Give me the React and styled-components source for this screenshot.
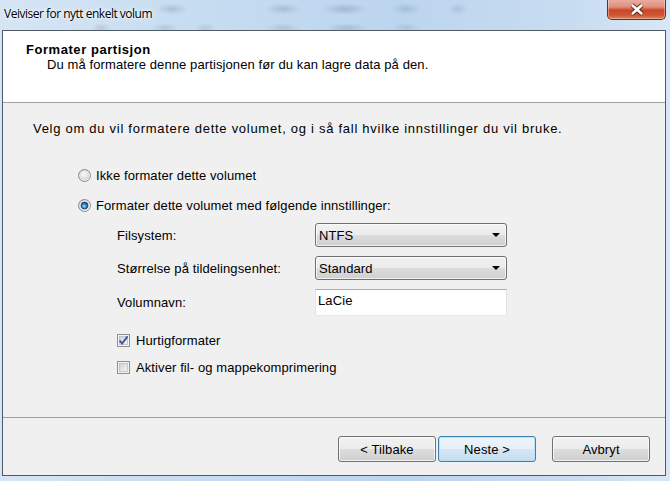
import React, { useId } from "react";
import styled, { createGlobalStyle } from "styled-components";

const GlobalStyle = createGlobalStyle`
  *, *::before, *::after { box-sizing: border-box; }
  html, body { margin: 0; padding: 0; }
  body {
    width: 670px;
    height: 481px;
    overflow: hidden;
    background: #c4daf0;
    font-family: "Liberation Sans", Arial, sans-serif;
  }
`;

const Window = styled.div`
  width: 670px;
  height: 481px;
  display: flex;
  flex-direction: column;
  background:
    radial-gradient(ellipse 16px 6px at 172px 9px, rgba(60, 80, 100, 0.2), transparent),
    radial-gradient(ellipse 18px 6px at 283px 9px, rgba(60, 80, 100, 0.2), transparent),
    radial-gradient(ellipse 24px 6px at 345px 9px, rgba(60, 80, 100, 0.22), transparent),
    radial-gradient(ellipse 15px 6px at 406px 9px, rgba(60, 80, 100, 0.18), transparent),
    radial-gradient(ellipse 10px 6px at 458px 9px, rgba(60, 80, 100, 0.15), transparent),
    radial-gradient(ellipse 10px 5px at 101px 28px, rgba(60, 80, 100, 0.16), transparent),
    radial-gradient(ellipse 14px 5px at 165px 28px, rgba(60, 80, 100, 0.16), transparent),
    radial-gradient(ellipse 10px 5px at 205px 28px, rgba(60, 80, 100, 0.14), transparent),
    radial-gradient(ellipse 18px 5px at 283px 28px, rgba(60, 80, 100, 0.16), transparent),
    radial-gradient(ellipse 22px 5px at 347px 28px, rgba(60, 80, 100, 0.18), transparent),
    radial-gradient(ellipse 14px 5px at 406px 28px, rgba(60, 80, 100, 0.14), transparent),
    linear-gradient(90deg, #d6e5f4 0%, #c6dcf1 30%, #bcd5ee 60%, #c8dcf1 85%, #d8e7f5 100%);
`;

const TitleBar = styled.div`
  height: 30px;
  flex: none;
  display: flex;
  justify-content: space-between;
  align-items: flex-start;
`;

const Caption = styled.div`
  padding: 6px 0 0 4px;
  font-family: "Open Sans", "Liberation Sans", sans-serif;
  font-size: 12px;
  line-height: 16px;
  letter-spacing: -0.5px;
  color: #000;
  text-shadow: 0 0 6px #fff, 0 0 3px #fff;
`;

const CloseButton = styled.button`
  width: 59px;
  height: 21px;
  margin: -1px 4px 0 0;
  padding: 0;
  border: 1px solid #6b2a1f;
  border-top: none;
  border-radius: 0 0 5px 5px;
  background: linear-gradient(
    #eab0a3 0%,
    #df8f7b 40%,
    #c9472a 55%,
    #cf5534 80%,
    #e0825c 100%
  );
  box-shadow: inset 0 0 0 1px rgba(255, 255, 255, 0.35);
  display: flex;
  align-items: center;
  justify-content: center;
`;

const Client = styled.div`
  flex: 1;
  min-height: 0;
  margin: 0 4px 5px 2px;
  border: 1px solid #4f5a66;
  background: #f0f0f0;
  display: flex;
  flex-direction: column;
  color: #000;
  font-size: 13px;
  letter-spacing: 0.1px;
`;

const Header = styled.header`
  height: 72px;
  flex: none;
  background: #fff;
  border-bottom: 1px solid #a0a0a0;
  padding: 11px 0 0 23px;
`;

const HeaderTitle = styled.h1`
  margin: 0;
  font-size: 13px;
  font-weight: bold;
  line-height: 15px;
  letter-spacing: 0.55px;
`;

const HeaderSubtitle = styled.p`
  margin: 0 0 0 21px;
  font-size: 13px;
  line-height: 15px;
`;

const Body = styled.main`
  flex: 1;
  min-height: 0;
  padding: 18px 0 0 30px;
  display: flex;
  flex-direction: column;
  align-items: flex-start;
`;

const Intro = styled.p`
  margin: 0;
  line-height: 15px;
  letter-spacing: 0.72px;
`;

const OptionList = styled.div`
  margin: 32px 0 0 45px;
  display: flex;
  flex-direction: column;
  gap: 15px;
`;

const ChoiceRow = styled.label`
  display: flex;
  align-items: center;
  gap: ${(p) => p.$gap || 5}px;
  height: 15px;
  line-height: 15px;
`;

const Settings = styled.div`
  margin: 10px 0 0 84px;
  display: grid;
  grid-template-columns: 198px 192px;
  grid-auto-rows: auto;
  row-gap: 9px;
  align-items: center;
`;

const FieldLabel = styled.span`
  line-height: 15px;
`;

const Combo = styled.div`
  height: 24px;
  border: 1px solid #707070;
  border-radius: 3px;
  padding: 0 6px 0 3px;
  display: flex;
  align-items: center;
  justify-content: space-between;
  background: linear-gradient(#f2f2f2 0%, #ebebeb 50%, #dddddd 50%, #cfcfcf 100%);
  box-shadow: inset 0 0 0 1px rgba(255, 255, 255, 0.7);
  font-size: 13px;
`;

const TextField = styled.input`
  height: 27px;
  width: 192px;
  margin: 0;
  padding: 0 3px 4px 2px;
  border: 1px solid #dbe3ec;
  border-top-color: #abadb3;
  border-left-color: #e2e3ea;
  border-bottom-color: #e3e9ef;
  background: #fff;
  font-family: "Liberation Sans", Arial, sans-serif;
  font-size: 13px;
  letter-spacing: 0.1px;
  color: #000;
  outline: none;
`;

const CheckList = styled.div`
  margin: 17px 0 0 84px;
  display: flex;
  flex-direction: column;
  gap: 12px;
`;

const Footer = styled.footer`
  height: 58px;
  flex: none;
  border-top: 1px solid #a0a0a0;
  padding: 18px 15px 0 0;
  display: flex;
  justify-content: flex-end;
  align-items: flex-start;
`;

const NavGroup = styled.div`
  display: flex;
  gap: 2px;
  margin-right: 16px;
`;

const Button = styled.button`
  width: 98px;
  height: 26px;
  padding: 0;
  border: 1px solid ${(p) => (p.$primary ? "#3c7fb1" : "#707070")};
  border-radius: 3px;
  background: ${(p) =>
    p.$primary
      ? "linear-gradient(#eef6fc 0%, #e4eff9 50%, #d4e6f4 50%, #c8ddef 100%)"
      : "linear-gradient(#f2f2f2 0%, #ebebeb 50%, #dddddd 50%, #cfcfcf 100%)"};
  box-shadow: inset 0 0 0 1px
    ${(p) => (p.$primary ? "rgba(180, 225, 250, 0.9)" : "rgba(255, 255, 255, 0.7)")};
  font-family: "Liberation Sans", Arial, sans-serif;
  font-size: 13px;
  letter-spacing: 0.1px;
  color: #000;
`;

function cleanId(id) {
  return id.replace(/[^a-zA-Z0-9]/g, "");
}

function RadioIcon({ checked }) {
  const id = cleanId(useId());
  return (
    <svg width="13" height="13" viewBox="0 0 13 13" aria-hidden="true">
      <defs>
        <linearGradient id={`${id}o`} x1="0" y1="0" x2="1" y2="1">
          <stop offset="0" stopColor="#cfcfcf" />
          <stop offset="1" stopColor="#ffffff" />
        </linearGradient>
        <radialGradient id={`${id}i`} cx="0.4" cy="0.35" r="0.7">
          <stop offset="0" stopColor="#fbfbfb" />
          <stop offset="1" stopColor="#d3d3d3" />
        </radialGradient>
        <radialGradient id={`${id}d`} cx="0.45" cy="0.6" r="0.6">
          <stop offset="0" stopColor="#a6ecff" />
          <stop offset="0.45" stopColor="#3c8fd6" />
          <stop offset="1" stopColor="#0d3b70" />
        </radialGradient>
      </defs>
      <circle cx="6.5" cy="6.5" r="6" fill={`url(#${id}o)`} stroke="#8a8a8a" />
      <circle cx="6.5" cy="6.5" r="4.6" fill={`url(#${id}i)`} />
      {checked && (
        <circle
          cx="6.5"
          cy="6.5"
          r="3.4"
          fill={`url(#${id}d)`}
          stroke="#1b3d66"
          strokeWidth="0.8"
        />
      )}
    </svg>
  );
}

function CheckIcon({ checked }) {
  const id = cleanId(useId());
  return (
    <svg width="13" height="13" viewBox="0 0 13 13" aria-hidden="true">
      <defs>
        <linearGradient id={`${id}g`} x1="0" y1="0" x2="1" y2="1">
          <stop offset="0" stopColor="#cbcfd5" />
          <stop offset="1" stopColor="#f7f7f7" />
        </linearGradient>
      </defs>
      <rect x="0.5" y="0.5" width="12" height="12" fill="#f4f4f4" stroke="#8e8f8f" />
      <rect x="2.5" y="2.5" width="8" height="8" fill={`url(#${id}g)`} stroke="#b7bcc2" strokeWidth="0.8" />
      {checked && (
        <path
          d="M2.6 6.6 L5.1 9.6 L10.6 2.4"
          fill="none"
          stroke="#3f5694"
          strokeWidth="1.9"
          strokeLinejoin="miter"
        />
      )}
    </svg>
  );
}

function ArrowDown() {
  return (
    <svg width="8" height="4" viewBox="0 0 8 4" aria-hidden="true">
      <path d="M0 0 H8 L4 4 Z" fill="#000" />
    </svg>
  );
}

function CloseGlyph() {
  return (
    <svg width="16" height="13" viewBox="0 0 16 13" aria-hidden="true">
      <path d="M3 2 L13 11 M13 2 L3 11" stroke="rgba(70,25,15,0.75)" strokeWidth="4.6" />
      <path d="M3 2 L13 11 M13 2 L3 11" stroke="#ffffff" strokeWidth="2.6" />
    </svg>
  );
}

export default function App() {
  return (
    <>
      <GlobalStyle />
      <Window>
        <TitleBar>
          <Caption>Veiviser for nytt enkelt volum</Caption>
          <CloseButton aria-label="Lukk">
            <CloseGlyph />
          </CloseButton>
        </TitleBar>
        <Client>
          <Header>
            <HeaderTitle>Formater partisjon</HeaderTitle>
            <HeaderSubtitle>
              Du må formatere denne partisjonen før du kan lagre data på den.
            </HeaderSubtitle>
          </Header>
          <Body>
            <Intro>
              Velg om du vil formatere dette volumet, og i så fall hvilke innstillinger du vil bruke.
            </Intro>
            <OptionList>
              <ChoiceRow>
                <RadioIcon />
                Ikke formater dette volumet
              </ChoiceRow>
              <ChoiceRow>
                <RadioIcon checked />
                Formater dette volumet med følgende innstillinger:
              </ChoiceRow>
            </OptionList>
            <Settings>
              <FieldLabel>Filsystem:</FieldLabel>
              <Combo>
                NTFS
                <ArrowDown />
              </Combo>
              <FieldLabel>Størrelse på tildelingsenhet:</FieldLabel>
              <Combo>
                Standard
                <ArrowDown />
              </Combo>
              <FieldLabel>Volumnavn:</FieldLabel>
              <TextField defaultValue="LaCie" />
            </Settings>
            <CheckList>
              <ChoiceRow $gap={6}>
                <CheckIcon checked />
                Hurtigformater
              </ChoiceRow>
              <ChoiceRow $gap={6}>
                <CheckIcon />
                Aktiver fil- og mappekomprimering
              </ChoiceRow>
            </CheckList>
          </Body>
          <Footer>
            <NavGroup>
              <Button>&lt; Tilbake</Button>
              <Button $primary>Neste &gt;</Button>
            </NavGroup>
            <Button>Avbryt</Button>
          </Footer>
        </Client>
      </Window>
    </>
  );
}
